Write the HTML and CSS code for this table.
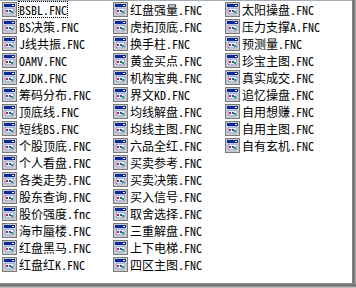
FILE: index.html
```html
<!DOCTYPE html>
<html>
<head>
<meta charset="utf-8">
<link rel="stylesheet" href="styles.css">
</head>
<body>
<svg width="0" height="0" class="defs">
  <defs>
    <symbol id="fnc" viewBox="0 0 16 16">
      <rect x="0.5" y="0.5" width="14" height="14" fill="#fff" stroke="#7b7b7b"/>
      <rect x="1.5" y="1.5" width="12" height="12" fill="#fff" stroke="#c8c8c8"/>
      <rect x="2" y="2" width="11" height="3" fill="#0a2a9a"/>
      <rect x="10" y="3" width="2" height="1" fill="#fff"/>
      <rect x="3" y="6" width="9" height="6" fill="#e8eef8" stroke="#5a6ab0" stroke-width="0.8"/>
      <rect x="4" y="8" width="2" height="2" fill="#d02020"/>
      <rect x="7" y="8" width="2" height="2" fill="#2050d0"/>
      <rect x="9" y="9" width="2" height="2" fill="#20a040"/>
    </symbol>
  </defs>
</svg>
<div class="shell">
  <div class="row-wrap">
    <div class="pane">
      <ul class="col c1">
        <li class="item"><svg class="ico"><use href="#fnc"/></svg><span class="name focus">BSBL.FNC</span></li>
        <li class="item"><svg class="ico"><use href="#fnc"/></svg><span class="name">BS决策.FNC</span></li>
        <li class="item"><svg class="ico"><use href="#fnc"/></svg><span class="name">J线共振.FNC</span></li>
        <li class="item"><svg class="ico"><use href="#fnc"/></svg><span class="name">OAMV.FNC</span></li>
        <li class="item"><svg class="ico"><use href="#fnc"/></svg><span class="name">ZJDK.FNC</span></li>
        <li class="item"><svg class="ico"><use href="#fnc"/></svg><span class="name">筹码分布.FNC</span></li>
        <li class="item"><svg class="ico"><use href="#fnc"/></svg><span class="name">顶底线.FNC</span></li>
        <li class="item"><svg class="ico"><use href="#fnc"/></svg><span class="name">短线BS.FNC</span></li>
        <li class="item"><svg class="ico"><use href="#fnc"/></svg><span class="name">个股顶底.FNC</span></li>
        <li class="item"><svg class="ico"><use href="#fnc"/></svg><span class="name">个人看盘.FNC</span></li>
        <li class="item"><svg class="ico"><use href="#fnc"/></svg><span class="name">各类走势.FNC</span></li>
        <li class="item"><svg class="ico"><use href="#fnc"/></svg><span class="name">股东查询.FNC</span></li>
        <li class="item"><svg class="ico"><use href="#fnc"/></svg><span class="name">股价强度.fnc</span></li>
        <li class="item"><svg class="ico"><use href="#fnc"/></svg><span class="name">海市蜃楼.FNC</span></li>
        <li class="item"><svg class="ico"><use href="#fnc"/></svg><span class="name">红盘黑马.FNC</span></li>
        <li class="item"><svg class="ico"><use href="#fnc"/></svg><span class="name">红盘红K.FNC</span></li>
      </ul>
      <ul class="col c2">
        <li class="item"><svg class="ico"><use href="#fnc"/></svg><span class="name">红盘强量.FNC</span></li>
        <li class="item"><svg class="ico"><use href="#fnc"/></svg><span class="name">虎拓顶底.FNC</span></li>
        <li class="item"><svg class="ico"><use href="#fnc"/></svg><span class="name">换手柱.FNC</span></li>
        <li class="item"><svg class="ico"><use href="#fnc"/></svg><span class="name">黄金买点.FNC</span></li>
        <li class="item"><svg class="ico"><use href="#fnc"/></svg><span class="name">机构宝典.FNC</span></li>
        <li class="item"><svg class="ico"><use href="#fnc"/></svg><span class="name">界文KD.FNC</span></li>
        <li class="item"><svg class="ico"><use href="#fnc"/></svg><span class="name">均线解盘.FNC</span></li>
        <li class="item"><svg class="ico"><use href="#fnc"/></svg><span class="name">均线主图.FNC</span></li>
        <li class="item"><svg class="ico"><use href="#fnc"/></svg><span class="name">六品全红.FNC</span></li>
        <li class="item"><svg class="ico"><use href="#fnc"/></svg><span class="name">买卖参考.FNC</span></li>
        <li class="item"><svg class="ico"><use href="#fnc"/></svg><span class="name">买卖决策.FNC</span></li>
        <li class="item"><svg class="ico"><use href="#fnc"/></svg><span class="name">买入信号.FNC</span></li>
        <li class="item"><svg class="ico"><use href="#fnc"/></svg><span class="name">取舍选择.FNC</span></li>
        <li class="item"><svg class="ico"><use href="#fnc"/></svg><span class="name">三重解盘.FNC</span></li>
        <li class="item"><svg class="ico"><use href="#fnc"/></svg><span class="name">上下电梯.FNC</span></li>
        <li class="item"><svg class="ico"><use href="#fnc"/></svg><span class="name">四区主图.FNC</span></li>
      </ul>
      <ul class="col c3">
        <li class="item"><svg class="ico"><use href="#fnc"/></svg><span class="name">太阳操盘.FNC</span></li>
        <li class="item"><svg class="ico"><use href="#fnc"/></svg><span class="name">压力支撑A.FNC</span></li>
        <li class="item"><svg class="ico"><use href="#fnc"/></svg><span class="name">预测量.FNC</span></li>
        <li class="item"><svg class="ico"><use href="#fnc"/></svg><span class="name">珍宝主图.FNC</span></li>
        <li class="item"><svg class="ico"><use href="#fnc"/></svg><span class="name">真实成交.FNC</span></li>
        <li class="item"><svg class="ico"><use href="#fnc"/></svg><span class="name">追忆操盘.FNC</span></li>
        <li class="item"><svg class="ico"><use href="#fnc"/></svg><span class="name">自用想赚.FNC</span></li>
        <li class="item"><svg class="ico"><use href="#fnc"/></svg><span class="name">自用主图.FNC</span></li>
        <li class="item"><svg class="ico"><use href="#fnc"/></svg><span class="name">自有玄机.FNC</span></li>
      </ul>
    </div>
    <div class="shadow-r"></div>
  </div>
  <div class="shadow-b"></div>
</div>
</body>
</html>
```

FILE: styles.css
```css
html, body {
  margin: 0;
  padding: 0;
  background: #ffffff;
}
.defs {
  position: absolute;
  width: 0;
  height: 0;
}
.shell {
  width: 356px;
  height: 288px;
  display: flex;
  flex-direction: column;
}
.row-wrap {
  display: flex;
  height: 283px;
}
.pane {
  width: 352px;
  height: 282px;
  border-top: 1px solid #a3adb8;
  background: #fff;
  display: grid;
  grid-template-columns: 111px 112px 1fr;
  padding-left: 2px;
  box-sizing: border-box;
  height: 283px;
}
.shadow-r {
  width: 4px;
  background: linear-gradient(to right, #8c8c8c, #6f6f6f 40%, #8a8a8a 70%, #b8b8b8);
}
.shadow-b {
  height: 5px;
  background: linear-gradient(to bottom, #9a9a9a, #6f6f6f 35%, #7c7c7c 60%, #b0b0b0 85%, #d8d8d8);
}
.col {
  list-style: none;
  margin: 0;
  padding: 0;
  display: flex;
  flex-direction: column;
}
.item {
  height: 17px;
  display: flex;
  align-items: center;
  font-family: "Noto Sans Mono CJK SC", "Noto Sans CJK SC", "Liberation Mono", monospace;
  font-size: 12px;
  color: #000;
  white-space: nowrap;
}
.ico {
  width: 16px;
  height: 16px;
  flex: none;
}
.name {
  height: 17px;
  line-height: 15px;
  box-sizing: border-box;
  border: 1px solid transparent;
  padding: 0 0 0 0;
  margin-left: 0;
}
.focus {
  border: 1px dotted #000;
}
```
